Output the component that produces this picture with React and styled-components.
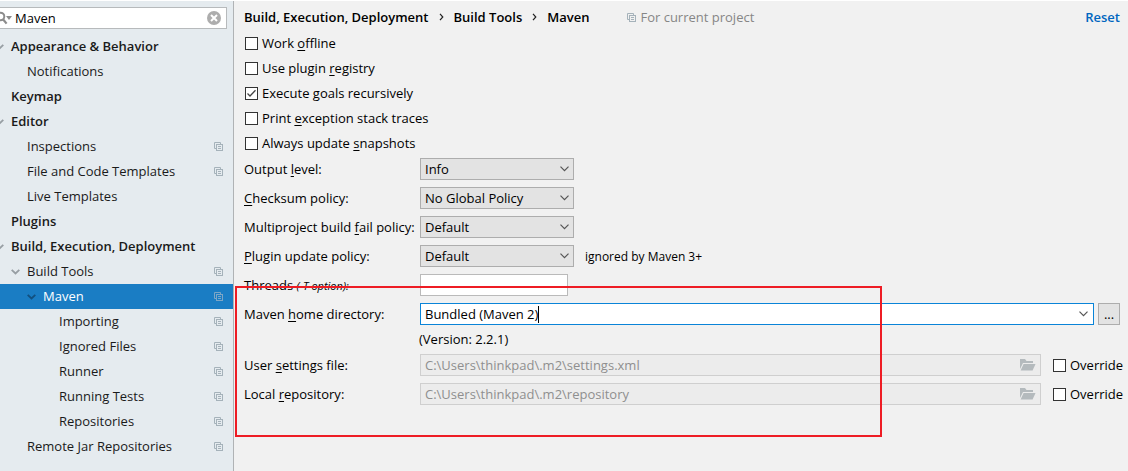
import React, { useState } from "react";
import styled, { createGlobalStyle } from "styled-components";

const GlobalStyle = createGlobalStyle`
  * {
    box-sizing: border-box;
  }

  body {
    margin: 0;
    background: #f1f1f1;
    color: #000;
    font-family: "Open Sans", "Noto Sans", sans-serif;
    font-size: 13px;
    line-height: 15px;
  }

  button,
  input,
  select {
    font: inherit;
    color: inherit;
  }

  u {
    text-underline-offset: 2px;
  }
`;

const Window = styled.div`
  display: flex;
  min-height: 100vh;
  border-top: 1px solid #fff;
`;

const Sidebar = styled.aside`
  flex: none;
  width: 234px;
  padding-top: 6px;
  overflow: hidden;
  background: #e5ebef;
  border-right: 1px solid #b0b3b5;
`;

const SearchBox = styled.div`
  display: flex;
  align-items: center;
  height: 22px;
  margin: 0 6px 5px -6px;
  padding: 0 5px 0 1px;
  background: #fff;
  border: 1px solid #b7babc;
`;

const SearchInput = styled.input`
  flex: 1;
  min-width: 0;
  padding: 0 0 0 3px;
  border: 0;
  outline: 0;
  background: none;
`;

const IconButton = styled.button`
  display: flex;
  flex: none;
  padding: 0;
  border: 0;
  background: none;
`;

const Tree = styled.ul`
  margin: 0;
  padding: 0;
  list-style: none;
`;

const TreeRow = styled.a`
  display: flex;
  align-items: center;
  height: 25px;
  padding-right: 10px;
  color: ${({ $selected }) => ($selected ? "#fff" : "#1a1a1a")};
  background: ${({ $selected }) => ($selected ? "#1a7dc4" : "none")};
  font-weight: ${({ $depth }) => ($depth === 0 ? 600 : 400)};
  text-decoration: none;
  white-space: nowrap;
`;

const TreeArrow = styled.span`
  display: flex;
  flex: none;
  width: 16px;
  margin-left: ${({ $depth }) => $depth * 16 - 5}px;
  color: ${({ $selected }) => ($selected ? "#12507f" : "#979ea3")};
`;

const TreeLabel = styled.span`
  flex: 1;
`;

const Main = styled.main`
  position: relative;
  flex: 1;
  min-width: 0;
  padding: 5px 8px 0 10px;
`;

const Header = styled.header`
  display: flex;
  align-items: center;
  height: 22px;
  margin-bottom: 3px;
`;

const Breadcrumbs = styled.nav`
  display: flex;
  align-items: center;
  gap: 10px;
  font-weight: 600;
`;

const ProjectNote = styled.span`
  display: flex;
  align-items: center;
  gap: 4px;
  margin-left: 38px;
  color: #868686;
`;

const ResetLink = styled.a`
  margin-left: auto;
  color: #0066c0;
  font-weight: 600;
  text-decoration: none;
`;

const Options = styled.div`
  display: flex;
  flex-direction: column;
  margin-bottom: 2px;
`;

const CheckLabel = styled.label`
  display: flex;
  align-items: center;
  gap: 4px;
  height: 25px;
  padding-left: 1px;
  white-space: nowrap;
`;

const OverrideLabel = styled(CheckLabel)`
  flex: none;
  width: 67px;
  height: 22px;
  padding: 0;
`;

const CheckMark = styled.span`
  display: grid;
  flex: none;
  width: 13px;
  height: 13px;

  > * {
    grid-area: 1 / 1;
  }

  > svg {
    pointer-events: none;
  }
`;

const CheckInput = styled.input`
  appearance: none;
  width: 13px;
  height: 13px;
  margin: 0;
  background: #fff;
  border: 1px solid #333;
`;

const Form = styled.div`
  display: grid;
  grid-template-columns: 169px minmax(0, 1fr);
  gap: 7px;
  align-items: center;
`;

const FieldLabel = styled.label`
  white-space: nowrap;

  small {
    font-size: 11px;
    font-style: italic;
  }
`;

const FieldRow = styled.div`
  display: flex;
  align-items: center;
  gap: ${({ $gap }) => $gap}px;
`;

const FieldHint = styled.span`
  font-size: 12px;
`;

const SelectBox = styled.div`
  display: grid;
  align-items: center;
  width: 154px;

  > * {
    grid-area: 1 / 1;
  }

  > svg {
    justify-self: end;
    margin-right: 5px;
    pointer-events: none;
  }
`;

const Select = styled.select`
  appearance: none;
  width: 100%;
  height: 22px;
  padding: 0 20px 0 4px;
  background: #e3e3e3;
  border: 1px solid #adadad;
  border-radius: 0;
`;

const ThreadsInput = styled.input`
  width: 148px;
  height: 22px;
  padding: 0 4px;
  background: #fff;
  border: 1px solid #bababa;
`;

const Combo = styled.div`
  display: flex;
  flex: 1;
  align-items: center;
  min-width: 0;
  height: 22px;
  padding: 0 5px 0 4px;
  background: #fff;
  border: 1px solid #0a84d8;
`;

const ComboInput = styled.input`
  field-sizing: content;
  padding: 0;
  border: 0;
  outline: 0;
  background: none;
`;

const Caret = styled.span`
  width: 1px;
  height: 17px;
  margin-right: auto;
  background: #000;
`;

const BrowseButton = styled.button`
  width: 22px;
  height: 22px;
  padding: 0;
  background: #e3e3e3;
  border: 1px solid #adadad;
`;

const PathBox = styled.div`
  display: flex;
  flex: 1;
  align-items: center;
  min-width: 0;
  height: 22px;
  padding: 0 4px;
  background: #ececec;
  border: 1px solid #cfcfcf;
`;

const PathInput = styled.input`
  flex: 1;
  min-width: 0;
  padding: 0;
  border: 0;
  background: none;
  color: #8f8f8f;
`;

const Version = styled.div`
  grid-column: 2;
  margin-left: -1px;
`;

const Highlight = styled.div`
  position: absolute;
  top: 285px;
  left: 1px;
  width: 647px;
  height: 151px;
  border: 2px solid #ee1c24;
  pointer-events: none;
`;

const CopyIcon = ({ color = "#a5b2ba" }) => (
  <svg width="9" height="9" viewBox="0 0 9 9" fill="none" stroke={color}>
    <path d="M2 6.5H.5V.5H6.5V2" />
    <rect x="2.5" y="2.5" width="6" height="6" />
    <path d="M4 4.5h3M4 6.5h3" />
  </svg>
);

const TreeChevron = () => (
  <svg width="9" height="6" viewBox="0 0 9 6" fill="none">
    <path d="M.7 .8L4.5 4.5L8.3 .8" stroke="currentColor" strokeWidth="1.8" />
  </svg>
);

const SelectChevron = () => (
  <svg width="9" height="6" viewBox="0 0 9 6" fill="none">
    <path d="M.5 .7L4.5 4.7L8.5 .7" stroke="#555" strokeWidth="1.2" />
  </svg>
);

const CrumbArrow = () => (
  <svg width="5" height="8" viewBox="0 0 5 8" fill="none">
    <path d="M1 .8L3.8 4L1 7.2" stroke="#222" strokeWidth="1.2" />
  </svg>
);

const SearchIcon = () => (
  <svg width="16" height="14" viewBox="0 0 16 14" fill="none">
    <circle cx="4.5" cy="5.5" r="3.8" stroke="#8c8c8c" strokeWidth="2" />
    <path d="M7 8.2L10.6 12.6" stroke="#8c8c8c" strokeWidth="2.2" />
    <path d="M10 5h6l-3 4z" fill="#8c8c8c" />
  </svg>
);

const ClearIcon = () => (
  <svg width="14" height="14" viewBox="0 0 14 14">
    <circle cx="7" cy="7" r="7" fill="#adadad" />
    <path d="M4 4l6 6M10 4l-6 6" stroke="#fff" strokeWidth="2" />
  </svg>
);

const FolderIcon = () => (
  <svg width="16" height="12" viewBox="0 0 16 12" fill="#b4babd">
    <path d="M0 0h5l1.5 2H13v2H3L0 10z" />
    <path d="M3.6 5H15.5L12.6 11.5H.6z" />
  </svg>
);

const TREE = [
  { label: "Appearance & Behavior", depth: 0, open: true },
  { label: "Notifications", depth: 1 },
  { label: "Keymap", depth: 0 },
  { label: "Editor", depth: 0, open: true },
  { label: "Inspections", depth: 1, project: true },
  { label: "File and Code Templates", depth: 1, project: true },
  { label: "Live Templates", depth: 1 },
  { label: "Plugins", depth: 0 },
  { label: "Build, Execution, Deployment", depth: 0, open: true },
  { label: "Build Tools", depth: 1, open: true, project: true },
  { label: "Maven", depth: 2, open: true, project: true },
  { label: "Importing", depth: 3, project: true },
  { label: "Ignored Files", depth: 3, project: true },
  { label: "Runner", depth: 3, project: true },
  { label: "Running Tests", depth: 3, project: true },
  { label: "Repositories", depth: 3, project: true },
  { label: "Remote Jar Repositories", depth: 1, project: true },
];

const Checkbox = ({ as: Label = CheckLabel, initial = false, children }) => {
  const [checked, setChecked] = useState(initial);

  return (
    <Label>
      <CheckMark>
        <CheckInput
          type="checkbox"
          checked={checked}
          onChange={(e) => setChecked(e.target.checked)}
        />
        {checked && (
          <svg width="13" height="13" viewBox="0 0 13 13" fill="none">
            <path d="M2.5 6.5L5 9L10.5 3.3" stroke="#444" strokeWidth="1.3" />
          </svg>
        )}
      </CheckMark>
      <span>{children}</span>
    </Label>
  );
};

const SelectField = ({ id, value }) => (
  <SelectBox>
    <Select id={id} defaultValue={value}>
      <option>{value}</option>
    </Select>
    <SelectChevron />
  </SelectBox>
);

const PathField = ({ id, value }) => (
  <FieldRow $gap={12}>
    <PathBox>
      <PathInput id={id} value={value} disabled readOnly />
      <FolderIcon />
    </PathBox>
    <Checkbox as={OverrideLabel}>Override</Checkbox>
  </FieldRow>
);

const SettingsTree = () => {
  const [selected, setSelected] = useState("Maven");

  return (
    <Tree>
      {TREE.map(({ label, depth, open, project }) => {
        const isSelected = label === selected;
        return (
          <li key={label}>
            <TreeRow
              href="#"
              $depth={depth}
              $selected={isSelected}
              onClick={() => setSelected(label)}
            >
              <TreeArrow $depth={depth} $selected={isSelected}>
                {open && <TreeChevron />}
              </TreeArrow>
              <TreeLabel>{label}</TreeLabel>
              {project && <CopyIcon color={isSelected ? "#7da6c6" : undefined} />}
            </TreeRow>
          </li>
        );
      })}
    </Tree>
  );
};

export default function App() {
  const [query, setQuery] = useState("Maven");
  const [home, setHome] = useState("Bundled (Maven 2)");

  return (
    <>
      <GlobalStyle />
      <Window>
        <Sidebar>
          <SearchBox>
            <SearchIcon />
            <SearchInput
              aria-label="Search settings"
              value={query}
              onChange={(e) => setQuery(e.target.value)}
            />
            <IconButton aria-label="Clear" onClick={() => setQuery("")}>
              <ClearIcon />
            </IconButton>
          </SearchBox>
          <SettingsTree />
        </Sidebar>

        <Main>
          <Header>
            <Breadcrumbs>
              <span>Build, Execution, Deployment</span>
              <CrumbArrow />
              <span>Build Tools</span>
              <CrumbArrow />
              <span>Maven</span>
            </Breadcrumbs>
            <ProjectNote>
              <CopyIcon />
              For current project
            </ProjectNote>
            <ResetLink href="#">Reset</ResetLink>
          </Header>

          <Options>
            <Checkbox>
              Work <u>o</u>ffline
            </Checkbox>
            <Checkbox>
              Use plugin <u>r</u>egistry
            </Checkbox>
            <Checkbox initial>
              Execute <u>g</u>oals recursively
            </Checkbox>
            <Checkbox>
              Print <u>e</u>xception stack traces
            </Checkbox>
            <Checkbox>
              Always update <u>s</u>napshots
            </Checkbox>
          </Options>

          <Form>
            <FieldLabel htmlFor="output">
              Output <u>l</u>evel:
            </FieldLabel>
            <SelectField id="output" value="Info" />

            <FieldLabel htmlFor="checksum">
              <u>C</u>hecksum policy:
            </FieldLabel>
            <SelectField id="checksum" value="No Global Policy" />

            <FieldLabel htmlFor="fail">
              Multiproject build <u>f</u>ail policy:
            </FieldLabel>
            <SelectField id="fail" value="Default" />

            <FieldLabel htmlFor="update">
              <u>P</u>lugin update policy:
            </FieldLabel>
            <FieldRow $gap={11}>
              <SelectField id="update" value="Default" />
              <FieldHint>ignored by Maven 3+</FieldHint>
            </FieldRow>

            <FieldLabel htmlFor="threads">
              Threads <small>(-T option):</small>
            </FieldLabel>
            <ThreadsInput id="threads" />

            <FieldLabel htmlFor="home">
              Maven <u>h</u>ome directory:
            </FieldLabel>
            <FieldRow $gap={4}>
              <Combo>
                <ComboInput
                  id="home"
                  value={home}
                  onChange={(e) => setHome(e.target.value)}
                />
                <Caret />
                <IconButton aria-label="Show Maven homes">
                  <SelectChevron />
                </IconButton>
              </Combo>
              <BrowseButton>...</BrowseButton>
            </FieldRow>

            <Version>(Version: 2.2.1)</Version>

            <FieldLabel htmlFor="settings">
              User <u>s</u>ettings file:
            </FieldLabel>
            <PathField
              id="settings"
              value="C:\Users\thinkpad\.m2\settings.xml"
            />

            <FieldLabel htmlFor="repository">
              Local <u>r</u>epository:
            </FieldLabel>
            <PathField
              id="repository"
              value="C:\Users\thinkpad\.m2\repository"
            />
          </Form>

          <Highlight />
        </Main>
      </Window>
    </>
  );
}
